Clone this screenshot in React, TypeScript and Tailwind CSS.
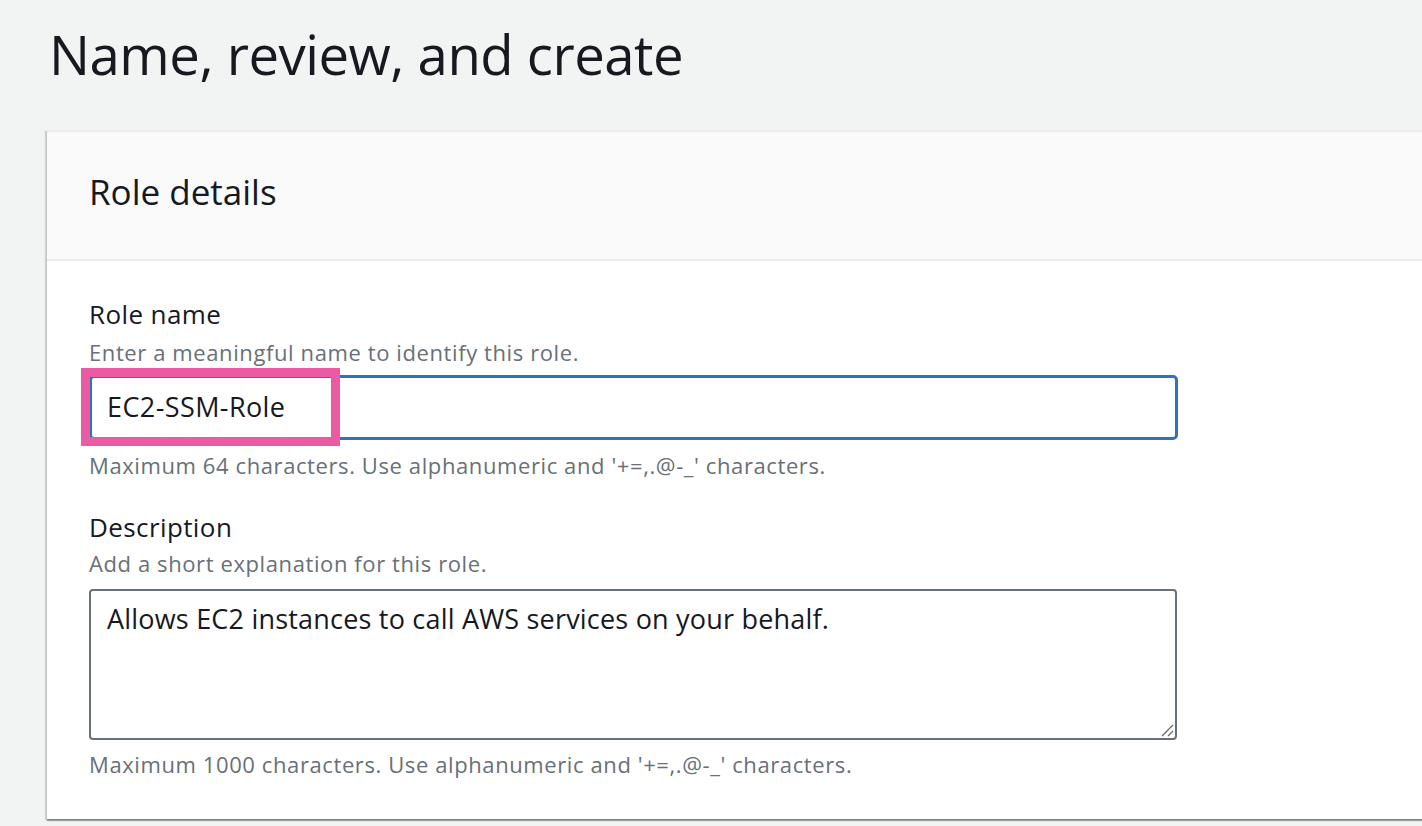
export default function App() {
  return (
    <div
      className="min-h-[826px] w-[1422px] overflow-hidden bg-[#f2f3f3] text-[#16191f]"
      style={{ fontFamily: '"Open Sans", "Noto Sans", Arial, sans-serif' }}>
      <div className="pl-[49px] pt-[20px]">
        <h1 className="text-[54.5px] leading-[68px] font-normal tracking-[-0.5px]">
          Name, review, and create
        </h1>
      </div>
      <div className="ml-[47px] mt-[42px] w-[1400px] border-t-2 border-[#eaeded] bg-white shadow-[0_2px_1px_0_rgba(0,28,36,0.35),2px_1px_1px_0_rgba(0,28,36,0.12),-2px_1px_1px_0_rgba(0,28,36,0.15)]">
        <div className="h-[129px] border-b-2 border-[#eaeded] bg-[#fafafa] pl-[42px] pt-[40px]">
          <h2 className="text-[35px] leading-[40px] font-normal">Role details</h2>
        </div>
        <div className="pl-[42px] pt-[37px] pb-[40px]">
          <div className="text-[26px] leading-[32px] tracking-[0.4px]">Role name</div>
          <div className="mt-[7px] text-[22px] leading-[30px] tracking-[0.6px] text-[#687078]">
            Enter a meaningful name to identify this role.
          </div>
          <div className="relative mt-[8px] h-[65px] w-[1089px] rounded-[5px] border-[3px] border-[#3172b8] bg-white">
            <div className="flex h-full items-center pl-[15px] text-[27px] tracking-[0.4px]">
              EC2-SSM-Role
            </div>
            <div className="absolute -left-[11px] -top-[10px] h-[78px] w-[259px] border-[9px] border-[#ea5ba4]" />
          </div>
          <div className="mt-[10px] text-[22px] leading-[30px] tracking-[0.6px] text-[#687078]">
            Maximum 64 characters. Use alphanumeric and '+=,.@-_' characters.
          </div>
          <div className="mt-[31px] text-[26px] leading-[32px] tracking-[0.4px]">Description</div>
          <div className="mt-[5px] text-[22px] leading-[30px] tracking-[0.6px] text-[#687078]">
            Add a short explanation for this role.
          </div>
          <div className="relative mt-[11px] h-[151px] w-[1088px] rounded-[4px] border-2 border-[#687078] bg-white px-[16px] pt-[10px] text-[27px] leading-[36px] tracking-[0.2px]">
            Allows EC2 instances to call AWS services on your behalf.
            <svg
              className="absolute bottom-[1px] right-[1px]"
              width="14"
              height="14"
              viewBox="0 0 14 14">
              <path d="M2 13 L13 2 M8 13 L13 8" stroke="#6b6b6b" strokeWidth="1.3" />
            </svg>
          </div>
          <div className="mt-[9px] text-[22px] leading-[30px] tracking-[0.6px] text-[#687078]">
            Maximum 1000 characters. Use alphanumeric and '+=,.@-_' characters.
          </div>
        </div>
      </div>
    </div>
  );
}
